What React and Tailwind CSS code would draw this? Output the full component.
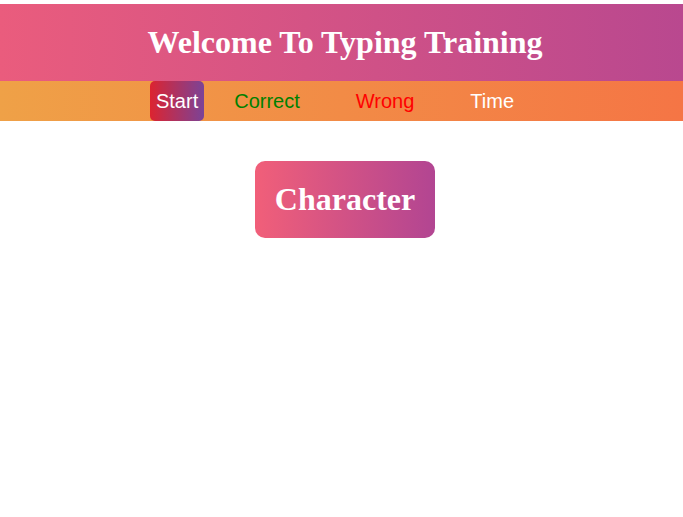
export default function App() {
  return (
    <div className="min-h-screen bg-white pt-1 text-white">
      <header className="bg-linear-to-r/srgb from-[#ea5c7d] to-[#b9488f] py-5 pl-[7px] text-center font-['Liberation_Serif',serif]">
        <h1 className="text-[32px] leading-[37px] font-bold">Welcome To Typing Training</h1>
      </header>
      <nav className="flex h-10 items-center justify-center bg-linear-to-r/srgb from-[#efa147] to-[#f57545] pr-[19px] font-['Liberation_Sans',sans-serif] text-xl">
        <button type="button" className="h-10 rounded-[5px] bg-linear-to-r/srgb from-[#dc2430] to-[#7b4397] px-[6px]">Start</button>
        <span className="ml-[30px] text-[#008000]">Correct</span>
        <span className="ml-14 text-[#ff0000]">Wrong</span>
        <span className="ml-14">Time</span>
      </nav>
      <main className="flex justify-center pt-10 pl-[7px]">
        <h1 className="rounded-[10px] bg-linear-to-r/srgb from-[#f15f79] to-[#b24592] p-5 font-['Liberation_Serif',serif] text-[32px] leading-[37px] font-bold">
          Character
        </h1>
      </main>
    </div>
  );
}
